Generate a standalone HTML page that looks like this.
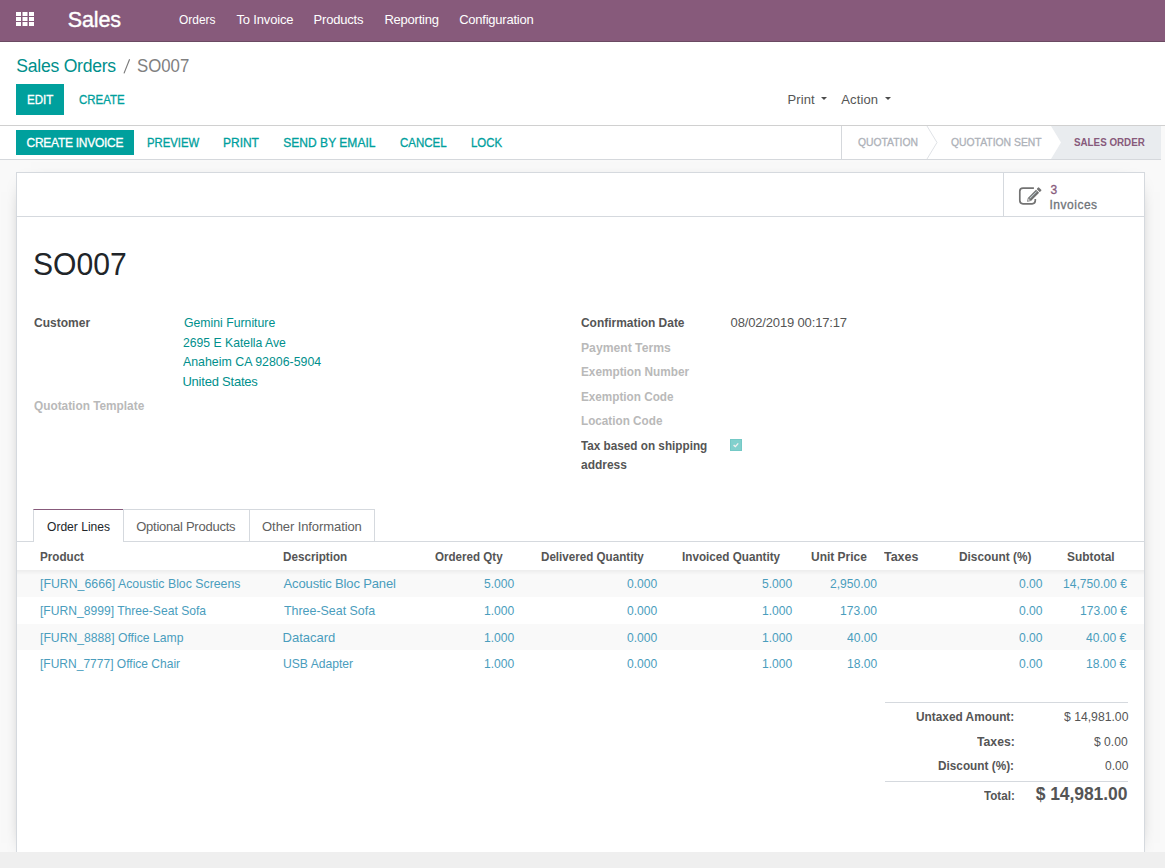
<!DOCTYPE html>
<html><head><meta charset="utf-8"><style>
html,body{margin:0;padding:0;}
body{width:1165px;height:868px;overflow:hidden;position:relative;background:#f9f9f9;font-family:"Liberation Sans",sans-serif;}
.t{position:absolute;white-space:pre;line-height:1;}
.s{position:absolute;}
</style></head><body>
<!-- navbar -->
<div class=s style="left:0;top:0;width:1165px;height:41px;background:#875A7B;border-bottom:1px solid #6b4a62;"></div>
<!-- apps grid icon -->
<svg class=s style="left:16px;top:12px" width="18" height="14" viewBox="0 0 18 14">
<g fill="#fff">
<rect x="0" y="0" width="5" height="4"/><rect x="6.5" y="0" width="5" height="4"/><rect x="13" y="0" width="5" height="4"/>
<rect x="0" y="5" width="5" height="4"/><rect x="6.5" y="5" width="5" height="4"/><rect x="13" y="5" width="5" height="4"/>
<rect x="0" y="10" width="5" height="4"/><rect x="6.5" y="10" width="5" height="4"/><rect x="13" y="10" width="5" height="4"/>
</g></svg>
<!-- control panel -->
<div class=s style="left:0;top:42px;width:1165px;height:83px;background:#fff;border-bottom:1px solid #d0d0d0;"></div>
<div class=s style="left:16px;top:84px;width:48px;height:31px;background:#00A09D;"></div>
<svg class=s style="left:118px;top:55px" width="16" height="22"><line x1="6.0" y1="18.4" x2="11.6" y2="4.2" stroke="#7a7a7a" stroke-width="1.15"/></svg>
<!-- carets -->
<div class=s style="left:821px;top:97px;width:0;height:0;border-left:3px solid transparent;border-right:3px solid transparent;border-top:3px solid #4c4c4c;"></div>
<div class=s style="left:885px;top:97px;width:0;height:0;border-left:3px solid transparent;border-right:3px solid transparent;border-top:3px solid #4c4c4c;"></div>
<!-- statusbar -->
<div class=s style="left:0;top:126px;width:1161px;height:33px;background:#fff;border-bottom:1px solid #d5d8dc;"></div>
<div class=s style="left:16px;top:130px;width:118px;height:25px;background:#00A09D;"></div>
<div class=s style="left:841px;top:126px;width:1px;height:33px;background:#d5d8dc;"></div>
<svg class=s style="left:1051px;top:126px" width="110" height="33"><polygon points="0,0 110,0 110,33 0,33 10,16.5" fill="#e9ecef"/></svg>
<svg class=s style="left:926px;top:126px" width="13" height="33"><polyline points="1,0 11,16.5 1,33" fill="none" stroke="#dfe2e6" stroke-width="1"/></svg>
<!-- sheet -->
<div class=s style="left:16px;top:172px;width:1127px;height:680px;background:#fff;border:1px solid #d5d9de;border-bottom:0;box-shadow:0 5px 20px -15px #000;"></div>
<div class=s style="left:17px;top:216px;width:1127px;height:1px;background:#d5d9de;"></div>
<div class=s style="left:1003px;top:173px;width:1px;height:43px;background:#d5d9de;"></div>
<!-- invoice icon -->
<svg class=s style="left:1014px;top:183px" width="32" height="26" viewBox="0 0 32 26">
<path d="M19.9 5.1 H9 a3.2 3.2 0 0 0 -3.2 3.2 V17.6 a3.2 3.2 0 0 0 3.2 3.2 H18.1 a3.2 3.2 0 0 0 3.2 -3.2 V15.9" fill="none" stroke="#737373" stroke-width="1.7"/>
<g transform="translate(13.1,18.7) rotate(-45)">
<polygon points="0,0 3.2,-2.2 3.2,2.2" fill="#707070"/>
<polygon points="1.3,0 3.2,-1.1 3.2,1.1" fill="#fff"/>
<rect x="3.2" y="-2.2" width="11.6" height="4.4" fill="#707070"/>
<rect x="4.2" y="-0.9" width="9.8" height="0.8" fill="#c8d8dc"/>
<rect x="15.7" y="-2.2" width="2.7" height="4.4" rx="0.6" fill="#737373"/>
</g>
</svg>
<!-- checkbox -->
<div class=s style="left:730px;top:439px;width:10px;height:10px;background:#82d0cd;border:1px solid #74c9c6;"></div>
<svg class=s style="left:732px;top:441px" width="8" height="8"><polyline points="1.6,4.1 3.4,5.6 6.2,2.4" fill="none" stroke="#f0f0f0" stroke-width="1.4"/></svg>
<!-- tabs -->
<div class=s style="left:17px;top:541px;width:1127px;height:1px;background:#d5d9de;"></div>
<div class=s style="left:33px;top:509px;width:89px;height:32px;background:#fff;border:1px solid #d5d9de;border-top:1px solid #875A7B;border-bottom:0;"></div>
<div class=s style="left:123px;top:509px;width:126px;height:32px;border:1px solid #d5d9de;border-left:0;border-bottom:0;"></div>
<div class=s style="left:250px;top:509px;width:124px;height:32px;border:1px solid #d5d9de;border-left:0;border-bottom:0;"></div>
<!-- table -->
<div class=s style="left:17px;top:570px;width:1127px;height:27px;background:#f9f9f9;"></div>
<div class=s style="left:17px;top:570px;width:1127px;height:5px;background:linear-gradient(rgba(0,0,0,0.05),rgba(0,0,0,0));"></div>
<div class=s style="left:17px;top:624px;width:1127px;height:26px;background:#f9f9f9;"></div>
<!-- totals lines -->
<div class=s style="left:885px;top:702px;width:243px;height:1px;background:#d5d9de;"></div>
<div class=s style="left:885px;top:781px;width:243px;height:1px;background:#d5d9de;"></div>
<!-- bottom bar -->
<div class=s style="left:0;top:852px;width:1165px;height:16px;background:#efefef;"></div>

<div class=t style='left:67.80px;top:10.00px;font-size:21.5px;color:#fff;letter-spacing:-0.133px;-webkit-text-stroke:0.4px #fff;'>Sales</div>
<div class=t style='left:178.50px;top:13.00px;font-size:13px;color:#fff;transform:scaleX(0.9172);transform-origin:0 0;'>Orders</div>
<div class=t style='left:236.50px;top:13.00px;font-size:13px;color:#fff;letter-spacing:-0.167px;'>To Invoice</div>
<div class=t style='left:313.60px;top:13.00px;font-size:13px;color:#fff;letter-spacing:-0.200px;'>Products</div>
<div class=t style='left:384.40px;top:13.00px;font-size:13px;color:#fff;letter-spacing:-0.217px;'>Reporting</div>
<div class=t style='left:459.20px;top:13.00px;font-size:13px;color:#fff;letter-spacing:-0.233px;'>Configuration</div>
<div class=t style='left:16.30px;top:58.00px;font-size:17.6px;color:#008f8c;letter-spacing:-0.261px;'>Sales Orders</div>
<div class=t style='left:136.50px;top:58.00px;font-size:17.6px;color:#808080;transform:scaleX(0.9539);transform-origin:0 0;'>SO007</div>
<div class=t style='left:26.60px;top:94.00px;font-size:12px;color:#fff;-webkit-text-stroke:0.3px;transform:scaleX(0.9642);transform-origin:0 0;'>EDIT</div>
<div class=t style='left:78.70px;top:94.00px;font-size:12px;color:#00A09D;-webkit-text-stroke:0.3px;transform:scaleX(0.9523);transform-origin:0 0;'>CREATE</div>
<div class=t style='left:787.60px;top:93.00px;font-size:13px;color:#555555;letter-spacing:0.070px;'>Print</div>
<div class=t style='left:841.20px;top:93.00px;font-size:13px;color:#555555;letter-spacing:0.140px;'>Action</div>
<div class=t style='left:26.50px;top:137.00px;font-size:12px;color:#fff;-webkit-text-stroke:0.3px;letter-spacing:-0.266px;'>CREATE INVOICE</div>
<div class=t style='left:147.40px;top:137.00px;font-size:12px;color:#00A09D;-webkit-text-stroke:0.3px;transform:scaleX(0.9444);transform-origin:0 0;'>PREVIEW</div>
<div class=t style='left:223.00px;top:137.00px;font-size:12px;color:#00A09D;-webkit-text-stroke:0.3px;letter-spacing:-0.017px;'>PRINT</div>
<div class=t style='left:283.30px;top:137.00px;font-size:12px;color:#00A09D;-webkit-text-stroke:0.3px;letter-spacing:0.029px;'>SEND BY EMAIL</div>
<div class=t style='left:399.50px;top:137.00px;font-size:12px;color:#00A09D;-webkit-text-stroke:0.3px;transform:scaleX(0.9570);transform-origin:0 0;'>CANCEL</div>
<div class=t style='left:470.50px;top:137.00px;font-size:12px;color:#00A09D;-webkit-text-stroke:0.3px;transform:scaleX(0.9518);transform-origin:0 0;'>LOCK</div>
<div class=t style='left:857.60px;top:137.00px;font-size:11.2px;color:#adb1b8;-webkit-text-stroke:0.3px;transform:scaleX(0.9249);transform-origin:0 0;'>QUOTATION</div>
<div class=t style='left:950.50px;top:137.00px;font-size:11.2px;color:#adb1b8;-webkit-text-stroke:0.3px;transform:scaleX(0.9270);transform-origin:0 0;'>QUOTATION SENT</div>
<div class=t style='left:1074.20px;top:137.00px;font-size:11.2px;color:#875A7B;font-weight:700;transform:scaleX(0.8758);transform-origin:0 0;'>SALES ORDER</div>
<div class=t style='left:1050.50px;top:184.00px;font-size:12px;color:#875A7B;-webkit-text-stroke:0.3px;'>3</div>
<div class=t style='left:1049.50px;top:199.00px;font-size:12px;color:#707479;-webkit-text-stroke:0.3px;letter-spacing:0.511px;'>Invoices</div>
<div class=t style='left:32.91px;top:249.00px;font-size:30.5px;color:#212529;transform:scaleX(0.9861);transform-origin:0 0;'>SO007</div>
<div class=t style='left:33.50px;top:316.00px;font-size:13px;color:#555555;font-weight:700;transform:scaleX(0.9238);transform-origin:0 0;'>Customer</div>
<div class=t style='left:183.90px;top:316.00px;font-size:13px;color:#008f8c;transform:scaleX(0.9422);transform-origin:0 0;'>Gemini Furniture</div>
<div class=t style='left:183.40px;top:336.00px;font-size:13px;color:#008f8c;transform:scaleX(0.9381);transform-origin:0 0;'>2695 E Katella Ave</div>
<div class=t style='left:183.40px;top:355.00px;font-size:13px;color:#008f8c;transform:scaleX(0.9509);transform-origin:0 0;'>Anaheim CA 92806-5904</div>
<div class=t style='left:182.40px;top:375.00px;font-size:13px;color:#008f8c;letter-spacing:-0.220px;'>United States</div>
<div class=t style='left:33.50px;top:399.00px;font-size:13px;color:#b9b9b9;font-weight:700;transform:scaleX(0.9101);transform-origin:0 0;'>Quotation Template</div>
<div class=t style='left:580.50px;top:316.00px;font-size:13px;color:#555555;font-weight:700;transform:scaleX(0.9187);transform-origin:0 0;'>Confirmation Date</div>
<div class=t style='left:730.60px;top:316.00px;font-size:13px;color:#555555;letter-spacing:-0.158px;'>08/02/2019 00:17:17</div>
<div class=t style='left:580.50px;top:341.00px;font-size:13px;color:#b9b9b9;font-weight:700;transform:scaleX(0.9359);transform-origin:0 0;'>Payment Terms</div>
<div class=t style='left:580.50px;top:365.00px;font-size:13px;color:#b9b9b9;font-weight:700;transform:scaleX(0.9066);transform-origin:0 0;'>Exemption Number</div>
<div class=t style='left:580.50px;top:390.00px;font-size:13px;color:#b9b9b9;font-weight:700;transform:scaleX(0.9019);transform-origin:0 0;'>Exemption Code</div>
<div class=t style='left:580.50px;top:414.00px;font-size:13px;color:#b9b9b9;font-weight:700;transform:scaleX(0.9018);transform-origin:0 0;'>Location Code</div>
<div class=t style='left:580.50px;top:439.00px;font-size:13px;color:#555555;font-weight:700;transform:scaleX(0.9025);transform-origin:0 0;'>Tax based on shipping</div>
<div class=t style='left:580.50px;top:458.00px;font-size:13px;color:#555555;font-weight:700;transform:scaleX(0.9208);transform-origin:0 0;'>address</div>
<div class=t style='left:46.50px;top:520.00px;font-size:13px;color:#212529;transform:scaleX(0.9281);transform-origin:0 0;'>Order Lines</div>
<div class=t style='left:136.20px;top:520.00px;font-size:13px;color:#606060;letter-spacing:-0.252px;'>Optional Products</div>
<div class=t style='left:262.10px;top:520.00px;font-size:13px;color:#606060;letter-spacing:-0.089px;'>Other Information</div>
<div class=t style='left:40.30px;top:550.00px;font-size:13px;color:#555555;font-weight:700;transform:scaleX(0.8959);transform-origin:0 0;'>Product</div>
<div class=t style='left:283.30px;top:550.00px;font-size:13px;color:#555555;font-weight:700;transform:scaleX(0.8970);transform-origin:0 0;'>Description</div>
<div class=t style='left:435.40px;top:550.00px;font-size:13px;color:#555555;font-weight:700;transform:scaleX(0.8914);transform-origin:0 0;'>Ordered Qty</div>
<div class=t style='left:541.30px;top:550.00px;font-size:13px;color:#555555;font-weight:700;transform:scaleX(0.8942);transform-origin:0 0;'>Delivered Quantity</div>
<div class=t style='left:682.40px;top:550.00px;font-size:13px;color:#555555;font-weight:700;transform:scaleX(0.8995);transform-origin:0 0;'>Invoiced Quantity</div>
<div class=t style='left:811.30px;top:550.00px;font-size:13px;color:#555555;font-weight:700;transform:scaleX(0.9214);transform-origin:0 0;'>Unit Price</div>
<div class=t style='left:884.30px;top:550.00px;font-size:13px;color:#555555;font-weight:700;transform:scaleX(0.9589);transform-origin:0 0;'>Taxes</div>
<div class=t style='left:959.20px;top:550.00px;font-size:13px;color:#555555;font-weight:700;transform:scaleX(0.9114);transform-origin:0 0;'>Discount (%)</div>
<div class=t style='left:1067.20px;top:550.00px;font-size:13px;color:#555555;font-weight:700;transform:scaleX(0.9147);transform-origin:0 0;'>Subtotal</div>
<div class=t style='left:40.40px;top:577.00px;font-size:13px;color:#4a9dbd;transform:scaleX(0.9468);transform-origin:0 0;'>[FURN_6666] Acoustic Bloc Screens</div>
<div class=t style='left:283.60px;top:577.00px;font-size:13px;color:#4a9dbd;letter-spacing:-0.145px;'>Acoustic Bloc Panel</div>
<div class=t style='left:484.36px;top:577.00px;font-size:13px;color:#4a9dbd;transform:scaleX(0.9300);transform-origin:0 0;'>5.000</div>
<div class=t style='left:626.86px;top:577.00px;font-size:13px;color:#4a9dbd;transform:scaleX(0.9300);transform-origin:0 0;'>0.000</div>
<div class=t style='left:761.96px;top:577.00px;font-size:13px;color:#4a9dbd;transform:scaleX(0.9300);transform-origin:0 0;'>5.000</div>
<div class=t style='left:829.95px;top:577.00px;font-size:13px;color:#4a9dbd;transform:scaleX(0.9300);transform-origin:0 0;'>2,950.00</div>
<div class=t style='left:1018.68px;top:577.00px;font-size:13px;color:#4a9dbd;transform:scaleX(0.9300);transform-origin:0 0;'>0.00</div>
<div class=t style='left:1062.72px;top:577.00px;font-size:13px;color:#4a9dbd;transform:scaleX(0.9300);transform-origin:0 0;'>14,750.00 €</div>
<div class=t style='left:40.40px;top:604.00px;font-size:13px;color:#4a9dbd;transform:scaleX(0.9317);transform-origin:0 0;'>[FURN_8999] Three-Seat Sofa</div>
<div class=t style='left:283.60px;top:604.00px;font-size:13px;color:#4a9dbd;transform:scaleX(0.9547);transform-origin:0 0;'>Three-Seat Sofa</div>
<div class=t style='left:484.36px;top:604.00px;font-size:13px;color:#4a9dbd;transform:scaleX(0.9300);transform-origin:0 0;'>1.000</div>
<div class=t style='left:626.86px;top:604.00px;font-size:13px;color:#4a9dbd;transform:scaleX(0.9300);transform-origin:0 0;'>0.000</div>
<div class=t style='left:761.96px;top:604.00px;font-size:13px;color:#4a9dbd;transform:scaleX(0.9300);transform-origin:0 0;'>1.000</div>
<div class=t style='left:840.04px;top:604.00px;font-size:13px;color:#4a9dbd;transform:scaleX(0.9300);transform-origin:0 0;'>173.00</div>
<div class=t style='left:1018.68px;top:604.00px;font-size:13px;color:#4a9dbd;transform:scaleX(0.9300);transform-origin:0 0;'>0.00</div>
<div class=t style='left:1079.52px;top:604.00px;font-size:13px;color:#4a9dbd;transform:scaleX(0.9300);transform-origin:0 0;'>173.00 €</div>
<div class=t style='left:40.40px;top:631.00px;font-size:13px;color:#4a9dbd;transform:scaleX(0.9377);transform-origin:0 0;'>[FURN_8888] Office Lamp</div>
<div class=t style='left:282.60px;top:631.00px;font-size:13px;color:#4a9dbd;'>Datacard</div>
<div class=t style='left:484.36px;top:631.00px;font-size:13px;color:#4a9dbd;transform:scaleX(0.9300);transform-origin:0 0;'>1.000</div>
<div class=t style='left:626.86px;top:631.00px;font-size:13px;color:#4a9dbd;transform:scaleX(0.9300);transform-origin:0 0;'>0.000</div>
<div class=t style='left:761.96px;top:631.00px;font-size:13px;color:#4a9dbd;transform:scaleX(0.9300);transform-origin:0 0;'>1.000</div>
<div class=t style='left:846.76px;top:631.00px;font-size:13px;color:#4a9dbd;transform:scaleX(0.9300);transform-origin:0 0;'>40.00</div>
<div class=t style='left:1018.68px;top:631.00px;font-size:13px;color:#4a9dbd;transform:scaleX(0.9300);transform-origin:0 0;'>0.00</div>
<div class=t style='left:1086.25px;top:631.00px;font-size:13px;color:#4a9dbd;transform:scaleX(0.9300);transform-origin:0 0;'>40.00 €</div>
<div class=t style='left:40.40px;top:657.00px;font-size:13px;color:#4a9dbd;transform:scaleX(0.9247);transform-origin:0 0;'>[FURN_7777] Office Chair</div>
<div class=t style='left:282.67px;top:657.00px;font-size:13px;color:#4a9dbd;transform:scaleX(0.9332);transform-origin:0 0;'>USB Adapter</div>
<div class=t style='left:484.36px;top:657.00px;font-size:13px;color:#4a9dbd;transform:scaleX(0.9300);transform-origin:0 0;'>1.000</div>
<div class=t style='left:626.86px;top:657.00px;font-size:13px;color:#4a9dbd;transform:scaleX(0.9300);transform-origin:0 0;'>0.000</div>
<div class=t style='left:761.96px;top:657.00px;font-size:13px;color:#4a9dbd;transform:scaleX(0.9300);transform-origin:0 0;'>1.000</div>
<div class=t style='left:846.76px;top:657.00px;font-size:13px;color:#4a9dbd;transform:scaleX(0.9300);transform-origin:0 0;'>18.00</div>
<div class=t style='left:1018.68px;top:657.00px;font-size:13px;color:#4a9dbd;transform:scaleX(0.9300);transform-origin:0 0;'>0.00</div>
<div class=t style='left:1086.25px;top:657.00px;font-size:13px;color:#4a9dbd;transform:scaleX(0.9300);transform-origin:0 0;'>18.00 €</div>
<div class=t style='left:915.70px;top:710.00px;font-size:13px;color:#555555;font-weight:700;transform:scaleX(0.9111);transform-origin:0 0;'>Untaxed Amount:</div>
<div class=t style='left:1063.50px;top:710.00px;font-size:13px;color:#555555;transform:scaleX(0.9380);transform-origin:0 0;'>$ 14,981.00</div>
<div class=t style='left:976.60px;top:735.00px;font-size:13px;color:#555555;font-weight:700;transform:scaleX(0.9399);transform-origin:0 0;'>Taxes:</div>
<div class=t style='left:1094.30px;top:735.00px;font-size:13px;color:#555555;transform:scaleX(0.9300);transform-origin:0 0;'>$ 0.00</div>
<div class=t style='left:938.40px;top:759.00px;font-size:13px;color:#555555;font-weight:700;transform:scaleX(0.9072);transform-origin:0 0;'>Discount (%):</div>
<div class=t style='left:1104.50px;top:759.00px;font-size:13px;color:#555555;transform:scaleX(0.9253);transform-origin:0 0;'>0.00</div>
<div class=t style='left:983.60px;top:789.00px;font-size:13px;color:#555555;font-weight:700;transform:scaleX(0.8947);transform-origin:0 0;'>Total:</div>
<div class=t style='left:1035.70px;top:786.00px;font-size:17.5px;color:#555555;font-weight:700;letter-spacing:-0.071px;'>$ 14,981.00</div>
</body></html>
